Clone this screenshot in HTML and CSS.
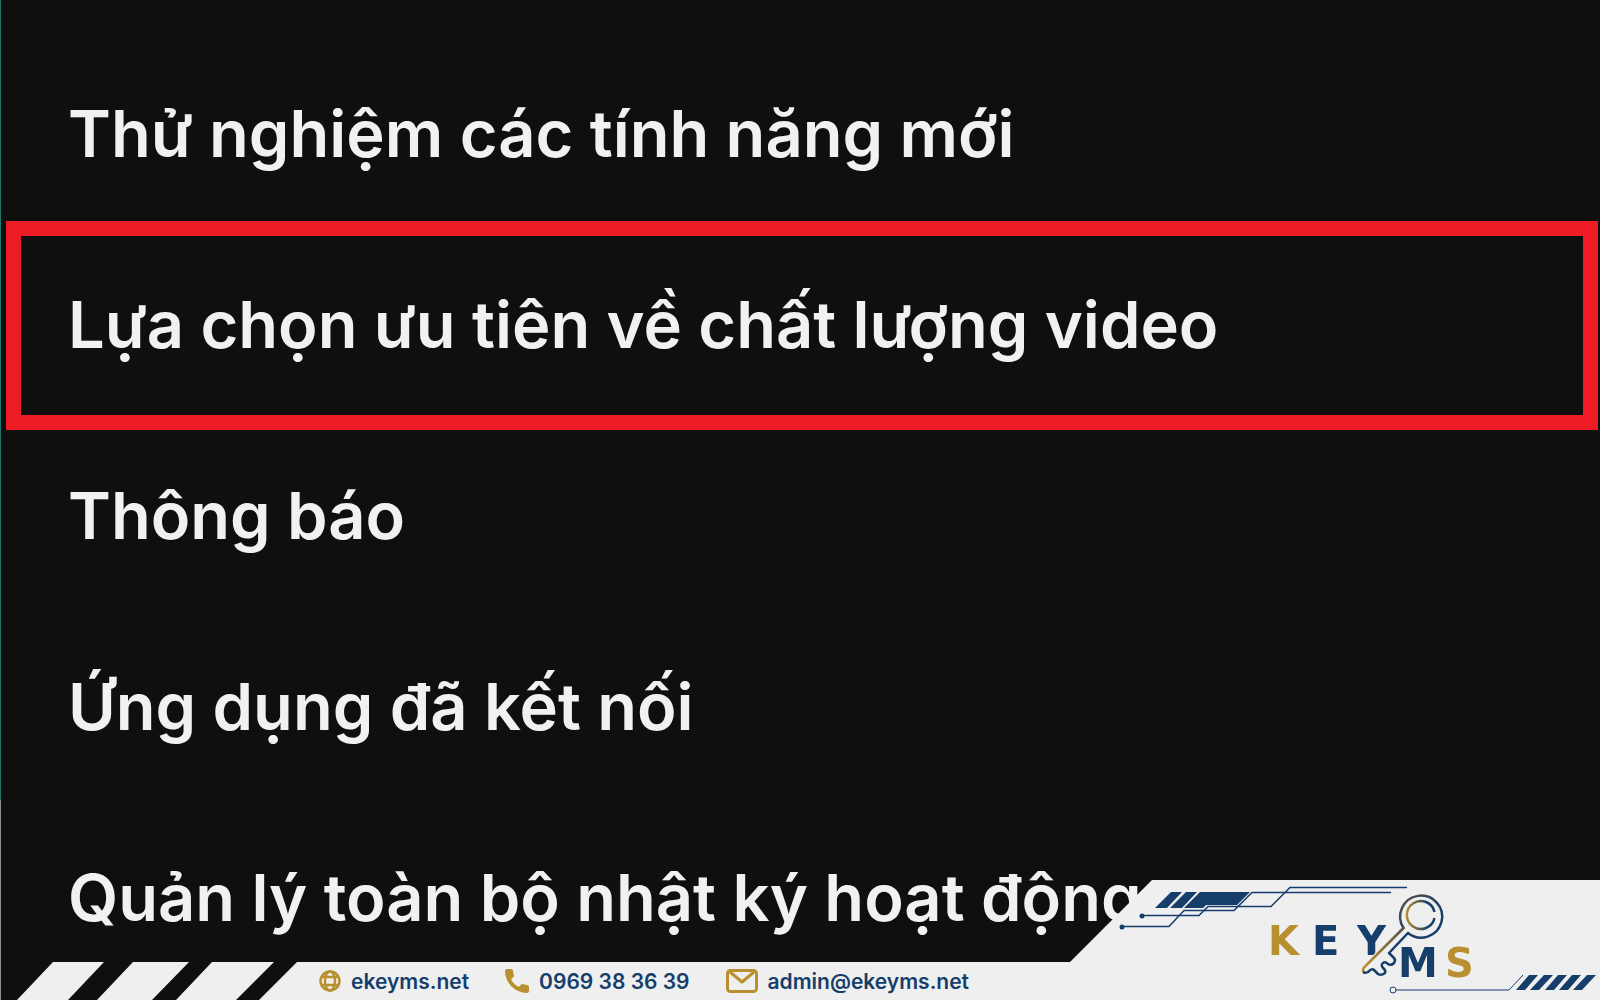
FILE: index.html
```html
<!DOCTYPE html>
<html lang="vi">
<head>
  <meta charset="utf-8">
  <title>Cài đặt</title>
  <link rel="stylesheet" href="styles.css">
</head>
<body>
  <main class="settings">
    <ul class="menu">
      <li><button class="menu-item">Thử nghiệm các tính năng mới</button></li>
      <li><button class="menu-item selected">Lựa chọn ưu tiên về chất lượng video</button></li>
      <li><button class="menu-item">Thông báo</button></li>
      <li><button class="menu-item">Ứng dụng đã kết nối</button></li>
      <li><button class="menu-item">Quản lý toàn bộ nhật ký hoạt động</button></li>
    </ul>
  </main>

  <footer class="footer">
    <svg class="stripes" viewBox="0 0 297 38" width="297" height="38" aria-hidden="true">
      <path d="M53 0H104L68 38H17ZM133 0H189L152 38H97ZM212 0H274L236 38H176ZM297 0V38H259Z" fill="#efefef"/>
    </svg>
    <address class="contacts">
      <a href="https://ekeyms.net">
        <svg width="22" height="22" viewBox="0 0 22 22" fill="none" stroke="#b8902f" stroke-width="2.500" aria-hidden="true">
          <circle cx="11" cy="11" r="9.500"/>
          <ellipse cx="11" cy="11" rx="5" ry="9.500"/>
          <path d="M2 7H20M2 15H20"/>
        </svg>
        <span>ekeyms.net</span>
      </a>
      <a href="tel:0969383639">
        <svg width="24" height="24" viewBox="0 0 24 24" fill="#b8902f" aria-hidden="true">
          <path d="M2 0H6Q8 0 8 2L9 7Q9 8 6 10Q9 16 14 18Q16 15 17 15L22 16Q24 16 24 18V22Q24 24 22 24Q13 24 6 17Q0 10 0 2Q0 0 2 0Z"/>
        </svg>
        <span>0969 38 36 39</span>
      </a>
      <a href="mailto:admin@ekeyms.net">
        <svg width="32" height="24" viewBox="0 0 32 24" fill="none" stroke="#b8902f" stroke-width="3" stroke-linejoin="round" aria-hidden="true">
          <rect x="1.500" y="1.500" width="29" height="21" rx="3"/>
          <path d="M4 3L16 13L28 3"/>
        </svg>
        <span>admin@ekeyms.net</span>
      </a>
    </address>
    <svg class="brand" viewBox="1070 880 530 120" width="530" height="120" role="img" aria-label="KEY MS">
      <defs>
        <linearGradient id="ring" gradientUnits="userSpaceOnUse" x1="1400" y1="905" x2="1425" y2="930">
          <stop offset="0" stop-color="#4c4c4c"/>
          <stop offset="1" stop-color="#153e6b"/>
        </linearGradient>
        <linearGradient id="shaft" gradientUnits="userSpaceOnUse" x1="1403" y1="928" x2="1366" y2="965">
          <stop offset="0" stop-color="#5a5348"/>
          <stop offset="1" stop-color="#b8902f"/>
        </linearGradient>
        <linearGradient id="innerRing" gradientUnits="userSpaceOnUse" x1="1406" y1="0" x2="1428" y2="0">
          <stop offset="0" stop-color="#b8902f"/>
          <stop offset="1" stop-color="#153e6b"/>
        </linearGradient>
      </defs>
      <path d="M1152 880H1600V1000H1070V962Z" fill="#efefef"/>

      <!-- circuit lines, top left -->
      <g fill="#153e6b">
        <path d="M1171 892H1182L1167 908H1155ZM1186 892H1197L1182 908H1170ZM1200 892H1250L1237 905H1206L1203 908H1184Z"/>
        <circle cx="1142" cy="916" r="2.500"/>
        <circle cx="1122" cy="927" r="2.500"/>
      </g>
      <g fill="none" stroke="#153e6b" stroke-width="1.500">
        <path d="M1142 915.500H1199L1208 906.500H1271L1290 887.500H1407"/>
        <path d="M1122 926.500H1169L1184 910.500H1234L1252 892.500H1391"/>
      </g>

      <!-- lettering -->
      <g class="brand-text">
        <text x="1268" y="955" fill="#b8902f">K</text>
        <text x="1312" y="955" fill="#153e6b">E</text>
        <text x="1357" y="955" fill="#153e6b">Y</text>
        <text x="1398" y="977" fill="#153e6b">M</text>
        <text x="1445" y="977" fill="#b8902f">S</text>
      </g>

      <!-- key -->
      <path d="M1401 927L1361 967L1368 977L1386 977L1398 962L1394 950L1412 934Z" fill="#efefef"/>
      <g fill="none" stroke-width="2.500" stroke-linecap="round" stroke-linejoin="round">
        <path d="M1408 933A21 21 0 1 0 1403.500 928" stroke="url(#ring)"/>
        <path d="M1403.500 928L1364 967.500Q1362 970 1364 972.500" stroke="url(#shaft)"/>
        <path d="M1364 972.500Q1366 973 1368 972Q1372 968 1374 970L1378 974Q1381 976 1385 973Q1386 971 1384 969Q1380 965 1383 963Q1385 961 1388 964Q1391 966 1394 963Q1396 960 1394 958L1389 953L1408 933" stroke="#153e6b"/>
        <path d="M1434.500 912A14 14 0 1 0 1434.500 918" stroke="url(#innerRing)" stroke-linecap="butt"/>
      </g>

      <!-- stripes, bottom right -->
      <path d="M1396 990H1509L1523 975" fill="none" stroke="#153e6b"/>
      <circle cx="1393" cy="990" r="3" fill="#efefef" stroke="#153e6b"/>
      <path d="M1529 975H1538L1525 990H1516ZM1544 975H1553L1539 990H1530ZM1558 975H1567L1554 990H1545ZM1572 975H1581L1568 990H1559ZM1587 975H1596L1582 990H1573Z" fill="#153e6b"/>
    </svg>
  </footer>
</body>
</html>
```
FILE: styles.css
```css
body {
  margin: 0;
  min-height: 100vh;
  background: #0f0f0f;
  font-family: Inter, sans-serif;
}
.settings {
  min-height: 100vh;
  box-sizing: border-box;
  padding-top: 39px;
  /* thin strip down the left edge */
  background: linear-gradient(#1f7a6b 80%, #8a9299 80%) left / 1px 100% no-repeat;
}
.menu {
  list-style: none;
  margin: 0;
  padding: 0 11px 0 15px;
}
.menu-item {
  display: block;
  width: 100%;
  height: 191px;
  padding: 0 53px 2px;
  border: none;
  background: none;
  color: #f1f1f1;
  font: 600 65px Inter, sans-serif;
  text-align: left;
  white-space: nowrap;
}
.selected {
  outline: 15px solid #ee1c25;
  outline-offset: -6px;
}
.footer {
  position: fixed;
  left: 0;
  right: 0;
  bottom: 0;
  display: flex;
  align-items: flex-end;
}
.stripes, .brand {
  display: block;
  flex: none;
}
.contacts {
  flex: 1;
  display: flex;
  align-items: center;
  gap: 36px;
  height: 38px;
  padding-left: 22px;
  background: #efefef;
  font-style: normal;
}
.contacts a {
  display: flex;
  align-items: center;
  gap: 10px;
  color: #153e6b;
  font-size: 21px;
  font-weight: 600;
  text-decoration: none;
}
.brand-text {
  font: bold 40px "DejaVu Sans", sans-serif;
}
```
